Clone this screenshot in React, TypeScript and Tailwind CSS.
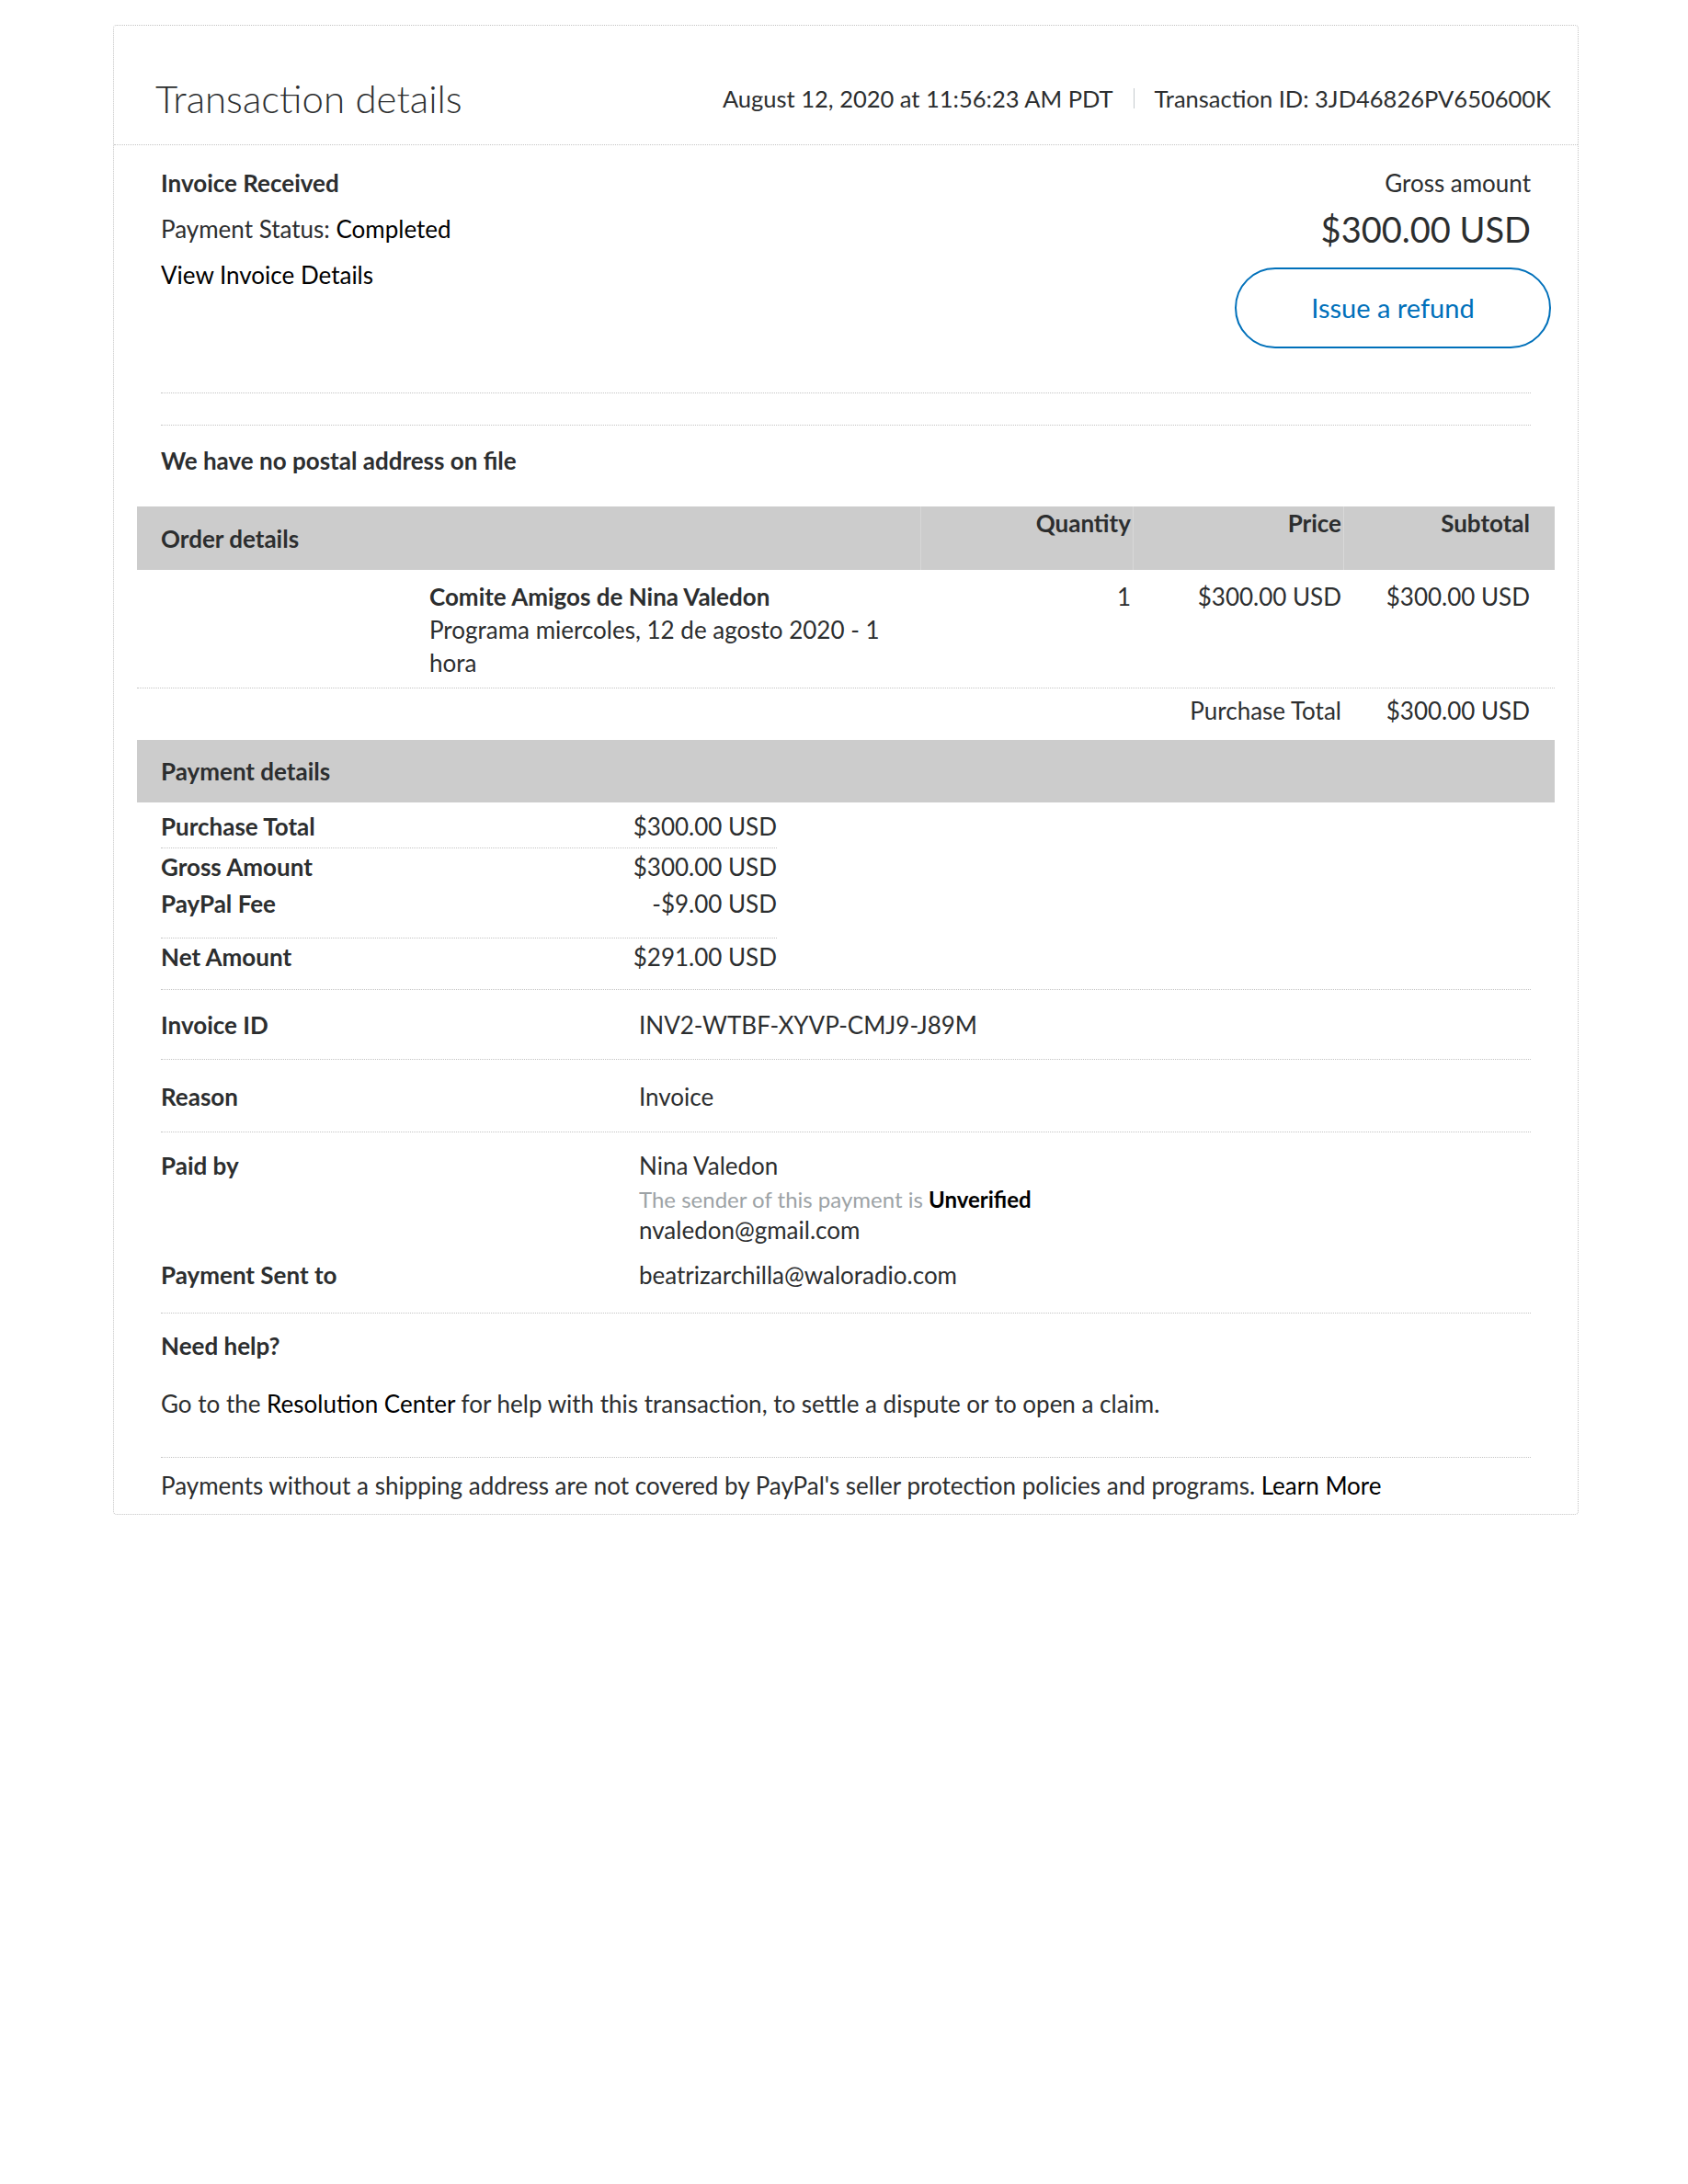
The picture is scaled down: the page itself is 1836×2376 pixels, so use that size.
import React from "react";

const dotted = "border-dotted border-[#c4c4c4]";

function MoneyRow({ label, value, className = "" }: { label: string; value: string; className?: string }) {
  return (
    <div className={"flex w-[670px] leading-[36px] " + className}>
      <div className="w-[500px] font-bold">{label}</div>
      <div className="w-[170px] text-right">{value}</div>
    </div>
  );
}

function InfoRow({ label, children, className = "" }: { label: string; children: React.ReactNode; className?: string }) {
  return (
    <div className={"flex leading-[36px] " + className}>
      <div className="w-[520px] shrink-0 font-bold">{label}</div>
      <div>{children}</div>
    </div>
  );
}

export default function App() {
  return (
    <div className="min-h-[2376px] bg-white pt-[27px] font-['Lato',sans-serif] text-[26px] text-[#2c2e2f]">
      <div className={"ml-[123px] w-[1594px] rounded-[4px] border " + dotted}>
        {/* header */}
        <div className={"flex h-[130px] items-center justify-between border-b pt-[28px] pl-[45px] pr-[29px] " + dotted}>
          <h1 className="text-[42px] font-light leading-[48px]">Transaction details</h1>
          <div className="flex items-center text-[25.5px] leading-[36px]">
            <span>August 12, 2020 at 11:56:23 AM PDT</span>
            <span className="mx-[22px] h-[22px] border-l border-[#c5cbce]" />
            <span>Transaction ID: 3JD46826PV650600K</span>
          </div>
        </div>

        <div className="px-[25px]">
          {/* summary */}
          <div className={"mx-[26px] flex justify-between border-b pt-[16px] pb-[48px] " + dotted}>
            <div className="leading-[50px]">
              <div className="font-bold">Invoice Received</div>
              <div>
                Payment Status: <span className="text-black">Completed</span>
              </div>
              <div className="text-black">View Invoice Details</div>
            </div>
            <div className="flex flex-col items-end">
              <div className="leading-[50px]">Gross amount</div>
              <div className="mt-[3px] text-[38px] leading-[44px]">$300.00 USD</div>
              <button className="-mr-[22px] mt-[20px] flex h-[88px] w-[344px] items-center justify-center rounded-full border-2 border-[#0070ba] text-[29px] text-[#0070ba]">
                Issue a refund
              </button>
            </div>
          </div>
          <div className={"mx-[26px] h-[35px] border-b " + dotted} />

          <div className="mx-[26px] mt-[20px] font-bold leading-[36px]">We have no postal address on file</div>

          {/* order details */}
          <div className="mt-[32px]">
            <div className="flex h-[69px] bg-[#cccccc] font-bold leading-[36px]">
              <div className="flex w-[852px] items-center pl-[26px]">Order details</div>
              <div className="w-[231px] border-l border-[#d8d8d8] pr-[2px] text-right">Quantity</div>
              <div className="w-[229px] border-l border-[#d8d8d8] pr-[2px] text-right">Price</div>
              <div className="flex-1 border-l border-[#d8d8d8] pr-[27px] text-right">Subtotal</div>
            </div>
            <div className={"flex border-b pt-[11px] pb-[9px] leading-[36px] " + dotted}>
              <div className="w-[292px]" />
              <div className="w-[560px] pl-[26px] pr-[26px]">
                <div className="font-bold">Comite Amigos de Nina Valedon</div>
                <div>Programa miercoles, 12 de agosto 2020 - 1 hora</div>
              </div>
              <div className="w-[231px] pr-[2px] text-right">1</div>
              <div className="w-[229px] whitespace-nowrap pr-[2px] text-right">$300.00 USD</div>
              <div className="flex-1 whitespace-nowrap pr-[27px] text-right">$300.00 USD</div>
            </div>
            <div className="flex pt-[6px] pb-[14px] leading-[36px]">
              <div className="w-[1083px]" />
              <div className="w-[229px] whitespace-nowrap pr-[2px] text-right">Purchase Total</div>
              <div className="flex-1 whitespace-nowrap pr-[27px] text-right">$300.00 USD</div>
            </div>
          </div>

          {/* payment details */}
          <div className="flex h-[68px] items-center bg-[#cccccc] pl-[26px] font-bold leading-[36px]">Payment details</div>
          <div className="mx-[26px]">
            <MoneyRow label="Purchase Total" value="$300.00 USD" className={"mt-[8px] border-b pb-[5px] " + dotted} />
            <MoneyRow label="Gross Amount" value="$300.00 USD" className="mt-[2px]" />
            <MoneyRow label="PayPal Fee" value="-$9.00 USD" className={"mt-[4px] border-b pb-[19px] " + dotted} />
            <div className={"border-b pt-[2px] pb-[17px] " + dotted}>
              <MoneyRow label="Net Amount" value="$291.00 USD" />
            </div>
            <InfoRow label="Invoice ID" className={"border-b pt-[20px] pb-[19px] " + dotted}>
              INV2-WTBF-XYVP-CMJ9-J89M
            </InfoRow>
            <InfoRow label="Reason" className={"border-b pt-[22px] pb-[20px] " + dotted}>
              Invoice
            </InfoRow>
            <div className={"border-b pt-[18px] pb-[23px] " + dotted}>
              <InfoRow label="Paid by">
                <div>Nina Valedon</div>
                <div className="mt-[4px] text-[24px] leading-[30px] text-[#9da3a6]">
                  The sender of this payment is <span className="font-bold text-black">Unverified</span>
                </div>
                <div>nvaledon@gmail.com</div>
              </InfoRow>
              <InfoRow label="Payment Sent to" className="mt-[13px]">
                beatrizarchilla@waloradio.com
              </InfoRow>
            </div>
            <div className={"border-b pt-[17px] pb-[40px] leading-[36px] " + dotted}>
              <div className="font-bold">Need help?</div>
              <div className="mt-[27px]">
                Go to the <span className="text-black">Resolution Center</span> for help with this transaction, to settle a dispute or to open a claim.
              </div>
            </div>
            <div className="pt-[12px] pb-[13px] leading-[36px]">
              Payments without a shipping address are not covered by PayPal's seller protection policies and programs.{" "}
              <span className="text-black">Learn More</span>
            </div>
          </div>
        </div>
      </div>
    </div>
  );
}
